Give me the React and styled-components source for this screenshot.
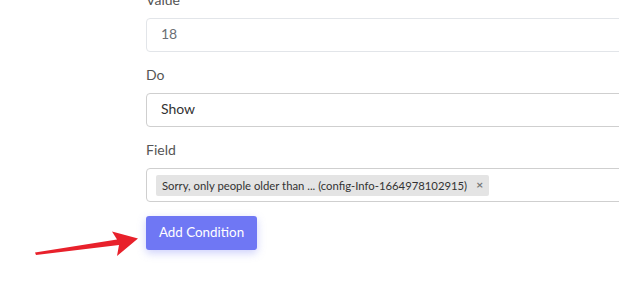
import React from 'react';
import styled, { createGlobalStyle } from 'styled-components';

const GlobalStyle = createGlobalStyle`
  html, body {
    margin: 0;
    padding: 0;
    background: #ffffff;
    overflow: hidden;
  }

  body {
    font-family: Lato, 'Open Sans', 'Liberation Sans', sans-serif;
    color: #333333;
  }
`;

const Page = styled.div`
  width: 619px;
  height: 290px;
  overflow: hidden;
`;

const Form = styled.div`
  margin-top: -10px;
  padding-left: 146px;
  display: flex;
  flex-direction: column;
  width: 560px;
`;

const Group = styled.div`
  display: flex;
  flex-direction: column;
  margin-bottom: 13px;
`;

const Label = styled.label`
  font-size: 14px;
  line-height: 20px;
  color: #555555;
  margin-bottom: 8px;
`;

const Control = styled.div`
  box-sizing: border-box;
  height: 34px;
  display: flex;
  align-items: center;
  padding: 0 ${({ $tags }) => ($tags ? '9px' : '14px')} ${({ $tags }) => ($tags ? '0' : '3px')};
  border: 1px solid ${({ $muted }) => ($muted ? '#e2e5e9' : '#cfcfcf')};
  border-radius: 4px;
  font-size: 14px;
  color: ${({ $muted }) => ($muted ? '#6b6f75' : '#333333')};
  background: #ffffff;
`;

const Tag = styled.span`
  display: inline-flex;
  align-items: center;
  gap: 9px;
  height: 21px;
  padding: 0 6px;
  background: #e4e4e4;
  border-radius: 2px;
  font-size: 11.3px;
  color: #333333;
  white-space: nowrap;
`;

const Remove = styled.span`
  font-size: 12px;
  font-weight: 700;
  color: #777777;
  line-height: 1;
`;

const ButtonRow = styled.div`
  position: relative;
  display: flex;
  margin-top: 1px;
`;

const Button = styled.button`
  box-sizing: border-box;
  width: 111px;
  height: 34px;
  padding: 0 0 2px;
  border: none;
  border-radius: 3px;
  background: #6f77f4;
  color: #ffffff;
  font-family: inherit;
  font-size: 13.4px;
  box-shadow: 0 3px 8px rgba(111, 119, 244, 0.35);
  cursor: pointer;
`;

const Arrow = styled.svg`
  position: absolute;
  left: -116px;
  top: 12px;
`;

const App = () => (
  <Page>
    <GlobalStyle />
    <Form>
      <Group>
        <Label>Value</Label>
        <Control $muted>18</Control>
      </Group>
      <Group>
        <Label>Do</Label>
        <Control>Show</Control>
      </Group>
      <Group>
        <Label>Field</Label>
        <Control $tags>
          <Tag>
            Sorry, only people older than ... (config-Info-1664978102915)
            <Remove>×</Remove>
          </Tag>
        </Control>
      </Group>
      <ButtonRow>
        <Arrow width="112" height="32" viewBox="0 0 112 32">
          <polygon
            points="5,24.5 87,11.5 82,3.5 108,10.5 87,28 89,17 6,27"
            fill="#e8212b"
          />
        </Arrow>
        <Button>Add Condition</Button>
      </ButtonRow>
    </Form>
  </Page>
);

export default App;
